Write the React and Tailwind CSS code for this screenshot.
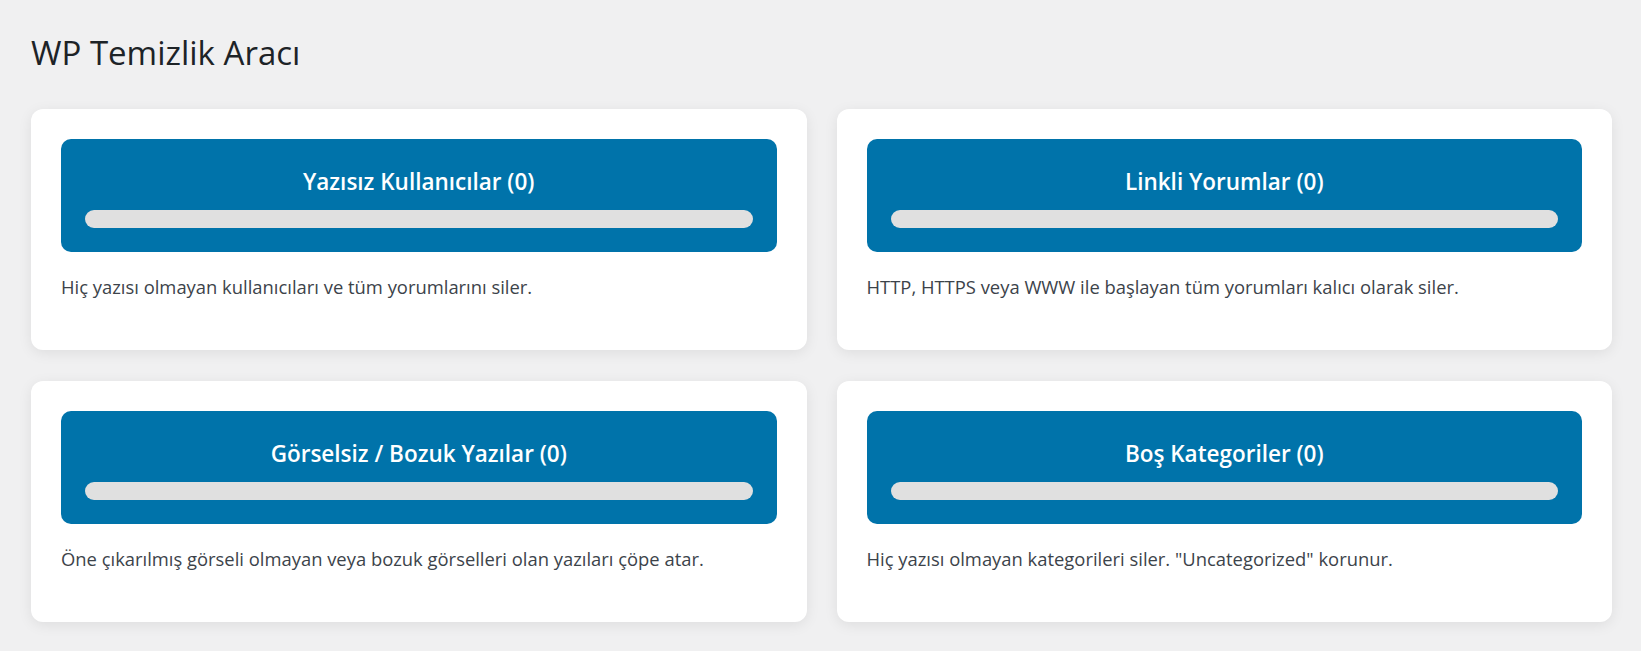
import React from "react";

const tools = [
  {
    title: "Yazısız Kullanıcılar (0)",
    text: "Hiç yazısı olmayan kullanıcıları ve tüm yorumlarını siler.",
  },
  {
    title: "Linkli Yorumlar (0)",
    text: "HTTP, HTTPS veya WWW ile başlayan tüm yorumları kalıcı olarak siler.",
  },
  {
    title: "Görselsiz / Bozuk Yazılar (0)",
    text: "Öne çıkarılmış görseli olmayan veya bozuk görselleri olan yazıları çöpe atar.",
  },
  {
    title: "Boş Kategoriler (0)",
    text: 'Hiç yazısı olmayan kategorileri siler. "Uncategorized" korunur.',
  },
];

function ToolCard({ title, text }) {
  return (
    <div className="bg-white rounded-xl p-[30px] shadow-[0_3px_14px_rgba(0,0,0,0.08)]">
      {/* Action box */}
      <div className="bg-[#0073aa] rounded-[10px] px-6 pt-[28px] pb-[24px]">
        <h2 className="text-center text-white font-semibold text-[22.5px] leading-[29px] mb-[14px]">
          {title}
        </h2>
        <div className="h-[18px] rounded-full bg-[#e0e0e0]" />
      </div>
      <p className="text-[#3c434a] text-[18.4px] leading-[26px] mt-[22px] mb-[20px]">
        {text}
      </p>
    </div>
  );
}

export default function App() {
  return (
    <div
      className="min-h-screen bg-[#f0f0f1] pl-[31px] pr-[29px] pt-[33px] pb-8"
      style={{ fontFamily: '"Open Sans", "Noto Sans", sans-serif' }}
    >
      <h1 className="text-[#1d2327] text-[33px] leading-[40px] font-normal mb-[36px]">
        WP Temizlik Aracı
      </h1>

      <div className="grid grid-cols-2 gap-x-[30px] gap-y-[31px]">
        {tools.map((t) => (
          <ToolCard key={t.title} title={t.title} text={t.text} />
        ))}
      </div>
    </div>
  );
}
